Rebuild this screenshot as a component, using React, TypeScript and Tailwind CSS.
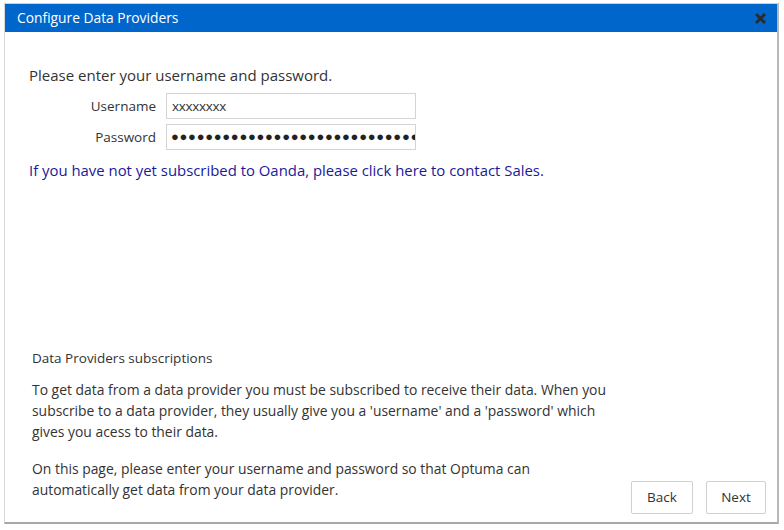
export default function App() {
  return (
    <div className="w-[784px] h-[530px] bg-white pt-[3px] pl-[4px] font-['Open_Sans',sans-serif]">
      <div className="w-[775px] h-[521px] flex flex-col border-l border-r-2 border-b-2 border-l-[#d8d8d8] border-r-[#b8b8b8] border-b-[#a8a8a8] border-t border-t-[#d0d0d0]">
        <div className="h-[28px] bg-[#0066cc] flex items-center justify-between pl-[12px] pr-[10px]">
          <span className="text-white text-[13.8px]">Configure Data Providers</span>
          <svg width="13" height="13" viewBox="0 0 13 13" aria-hidden>
            <path d="M2 2 L11 11 M11 2 L2 11" stroke="#2b2b2b" strokeWidth="3" strokeLinecap="butt" />
          </svg>
        </div>
        <div className="flex-1 flex flex-col pl-[24px] pr-[11px] text-[#333]">
          <p className="mt-[33px] text-[15px] leading-[20px]">Please enter your username and password.</p>
          <div className="mt-[8px] grid grid-cols-[127px_250px] gap-x-[10px] gap-y-[5px] items-center">
            <span className="text-right text-[13.5px]">Username</span>
            <div className="h-[26px] border border-[#d4d4d4] flex items-center px-[5px] text-[13.5px] tracking-[-0.3px]">xxxxxxxx</div>
            <span className="text-right text-[13.5px]">Password</span>
            <div className="h-[26px] border border-[#d4d4d4] flex items-center pl-[4px] overflow-hidden whitespace-nowrap text-[13px] tracking-[0.7px] text-[#222]">
              {"●".repeat(31)}
            </div>
          </div>
          <p className="mt-[10px] text-[14.9px] leading-[20px] text-[#1a1a99]">
            If you have not yet subscribed to Oanda, please click here to contact Sales.
          </p>
          <div className="flex-1" />
          <div className="flex items-end justify-between pl-[3px]">
            <div className="text-[13.9px] leading-[21px] pb-[22px]">
              <p className="text-[13.5px]">Data Providers subscriptions</p>
              <p className="mt-[10px] w-[580px]">
                To get data from a data provider you must be subscribed to receive their data. When you subscribe to a
                data provider, they usually give you a 'username' and a 'password' which gives you acess to their data.
              </p>
              <p className="mt-[16px] w-[580px]">
                On this page, please enter your username and password so that Optuma can automatically get data from
                your data provider.
              </p>
            </div>
            <div className="flex gap-[13px] pb-[8px]">
              <button className="w-[62px] h-[33px] border border-[#d0d0d0] rounded-[2px] bg-white text-[13.5px] text-[#333]">Back</button>
              <button className="w-[60px] h-[33px] border border-[#d0d0d0] rounded-[2px] bg-white text-[13.5px] text-[#333]">Next</button>
            </div>
          </div>
        </div>
      </div>
    </div>
  );
}
